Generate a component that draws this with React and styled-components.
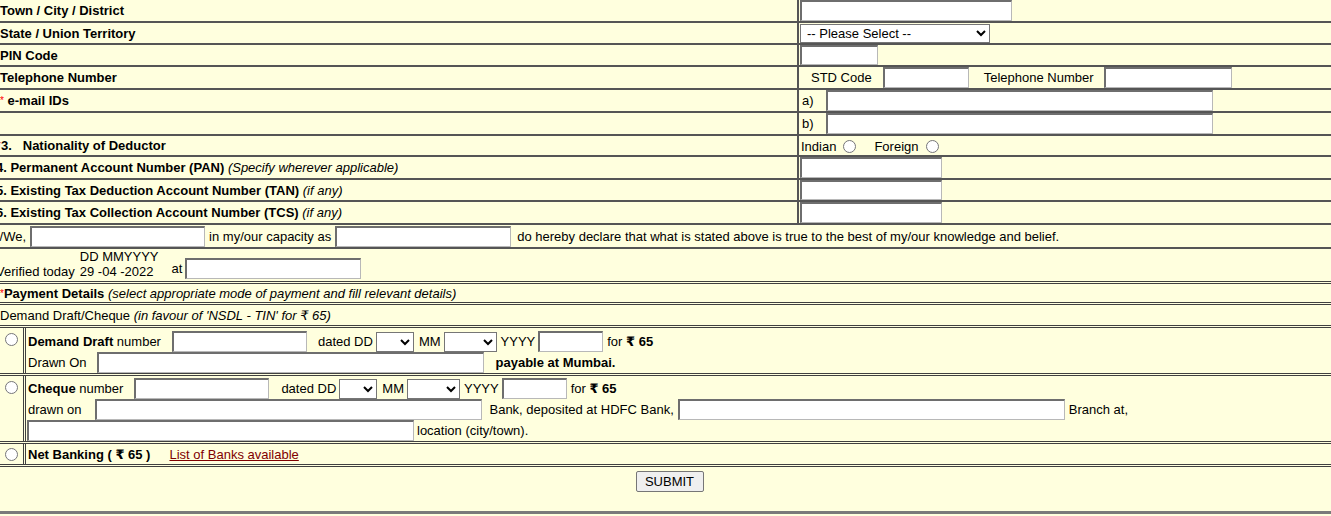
import React from 'react';
import styled, { createGlobalStyle } from 'styled-components';

const GlobalStyle = createGlobalStyle`
  html, body {
    margin: 0;
    padding: 0;
    background: #ffffde;
    overflow: hidden;
  }
  body {
    font-family: "Liberation Sans", Arial, "DejaVu Sans", sans-serif;
    font-size: 13px;
    line-height: 15px;
    color: #000;
  }
`;

const Page = styled.div`
  width: 1347px;
  margin-left: -4px;
  min-height: 516px;
  background: #ffffde;
`;

const Row = styled.div`
  box-sizing: border-box;
  display: flex;
  align-items: ${(p) => p.$align || 'center'};
  justify-content: ${(p) => p.$justify || 'flex-start'};
  height: ${(p) => p.$h}px;
  padding: ${(p) => p.$pt || 0}px 0 ${(p) => p.$pb || 0}px ${(p) => p.$pl || 0}px;
  border-bottom: ${(p) => (p.$double ? '3px double #404040' : '2px solid #555')};
  white-space: nowrap;
`;

const Label = styled.div`
  box-sizing: border-box;
  flex: 0 0 803px;
  align-self: stretch;
  display: flex;
  align-items: center;
  padding-left: ${(p) => p.$indent || 0}px;
  border-right: 2px solid #555;
  font-weight: bold;
`;

const Value = styled.div`
  flex: 1;
  display: flex;
  align-items: center;
  padding-left: 1px;
  padding-top: ${(p) => p.$pt || 0}px;
`;

const Text = styled.span`
  margin-left: ${(p) => p.$ml || 0}px;
  margin-bottom: ${(p) => p.$mb || 0}px;
  font-weight: ${(p) => (p.$bold ? 'bold' : 'normal')};
`;

const Note = styled.span`
  font-weight: normal;
  font-style: italic;
`;

const Req = styled.span`
  color: #ff0000;
  font-size: ${(p) => p.$size || 10}px;
  font-weight: normal;
  vertical-align: top;
`;

const Field = styled.input.attrs({ type: 'text' })`
  box-sizing: border-box;
  width: ${(p) => p.$w}px;
  height: ${(p) => p.$h || 20}px;
  margin: 0 0 0 ${(p) => p.$ml || 0}px;
  padding: 1px 2px;
  border-style: solid;
  border-width: 2px 1px 1px 2px;
  border-color: #6e6e6e #b8b8b8 #b8b8b8 #6e6e6e;
  background: #fff;
  font: 13px "Liberation Sans", Arial, sans-serif;
  flex: none;
`;

const Picker = styled.select`
  box-sizing: border-box;
  width: ${(p) => p.$w}px;
  height: ${(p) => p.$h || 20}px;
  margin: 0 0 0 ${(p) => p.$ml || 0}px;
  padding: 0 0 0 2px;
  border: 1px solid #767676;
  border-radius: 0;
  background: #fff;
  color: #000;
  font: 13px "Liberation Sans", Arial, sans-serif;
  flex: none;
`;

const Radio = styled.input.attrs({ type: 'radio' })`
  width: 13px;
  height: 13px;
  margin: 0 0 0 ${(p) => p.$ml || 0}px;
  flex: none;
`;

const DateStack = styled.div`
  display: flex;
  flex-direction: column;
  margin-left: ${(p) => p.$ml || 0}px;
`;

const PayRow = styled.div`
  box-sizing: border-box;
  display: flex;
  height: ${(p) => p.$h}px;
  border-bottom: 3px double #404040;
  white-space: nowrap;
`;

const RadioCell = styled.div`
  box-sizing: border-box;
  flex: 0 0 30px;
  padding: ${(p) => p.$pt}px 0 0 9px;
  border-right: 3px double #404040;
`;

const PayBody = styled.div`
  flex: 1;
  display: flex;
  flex-direction: column;
  padding: ${(p) => p.$pt || 0}px 0 0 2px;
`;

const Line = styled.div`
  display: flex;
  align-items: center;
  height: ${(p) => p.$h || 21}px;
`;

const BankLink = styled.a`
  margin-left: ${(p) => p.$ml || 0}px;
  color: #800000;
  text-decoration: underline;
`;

const SubmitButton = styled.button`
  box-sizing: border-box;
  width: 68px;
  height: 21px;
  padding: 0;
  border: 1px solid #767676;
  border-radius: 2px;
  background: #efefef;
  color: #000;
  font: 13px "Liberation Sans", Arial, sans-serif;
`;

const SubmitRow = styled(Row)`
  border-bottom: 3px solid #7a7a7a;
`;

const days = ['', ...Array.from({ length: 31 }, (_, i) => String(i + 1).padStart(2, '0'))];
const months = ['', ...Array.from({ length: 12 }, (_, i) => String(i + 1).padStart(2, '0'))];

const DateFields = ({ first }) => (
  <>
    <Text $ml={first}>dated DD</Text>
    <Picker $w={38} $ml={3}>
      {days.map((d) => <option key={d}>{d}</option>)}
    </Picker>
    <Text $ml={5}>MM</Text>
    <Picker $w={53} $ml={3}>
      {months.map((m) => <option key={m}>{m}</option>)}
    </Picker>
    <Text $ml={4}>YYYY</Text>
    <Field $w={65} $h={21} $ml={3} />
    <Text $ml={4}>for <b>₹ 65</b></Text>
  </>
);

export default function App() {
  return (
    <Page>
      <GlobalStyle />

      <Row $h={23}>
        <Label $indent={4}><span>Town / City / District</span></Label>
        <Value><Field $w={212} $h={21} /></Value>
      </Row>
      <Row $h={22}>
        <Label $indent={4}><span>State / Union Territory</span></Label>
        <Value>
          <Picker $w={190} $h={19}>
            <option>-- Please Select --</option>
          </Picker>
        </Value>
      </Row>
      <Row $h={22}>
        <Label $indent={4}><span>PIN Code</span></Label>
        <Value><Field $w={78} /></Value>
      </Row>
      <Row $h={23}>
        <Label $indent={4}><span>Telephone Number</span></Label>
        <Value>
          <Text $ml={11}>STD Code</Text>
          <Field $w={86} $h={21} $ml={11} />
          <Text $ml={15}>Telephone Number</Text>
          <Field $w={128} $h={21} $ml={10} />
        </Value>
      </Row>
      <Row $h={23}>
        <Label $indent={4}><span><Req>*</Req> e-mail IDs</span></Label>
        <Value>
          <Text $ml={2}>a)</Text>
          <Field $w={387} $h={21} $ml={12} />
        </Value>
      </Row>
      <Row $h={23}>
        <Label />
        <Value>
          <Text $ml={2}>b)</Text>
          <Field $w={387} $h={21} $ml={12} />
        </Value>
      </Row>
      <Row $h={21}>
        <Label><span><Req $size={13}>*</Req>3.&nbsp;&nbsp;&nbsp;Nationality of Deductor</span></Label>
        <Value $pt={2}>
          <Text $ml={1}>Indian</Text>
          <Radio name="nationality" $ml={7} />
          <Text $ml={18}>Foreign</Text>
          <Radio name="nationality" $ml={7} />
        </Value>
      </Row>
      <Row $h={23}>
        <Label><span>4. Permanent Account Number (PAN) <Note>(Specify wherever applicable)</Note></span></Label>
        <Value><Field $w={142} $h={21} /></Value>
      </Row>
      <Row $h={22}>
        <Label><span>5. Existing Tax Deduction Account Number (TAN) <Note>(if any)</Note></span></Label>
        <Value><Field $w={142} /></Value>
      </Row>
      <Row $h={23}>
        <Label><span>6. Existing Tax Collection Account Number (TCS) <Note>(if any)</Note></span></Label>
        <Value><Field $w={142} $h={21} /></Value>
      </Row>

      <Row $h={24}>
        <Text>I/We,</Text>
        <Field $w={175} $h={21} $ml={4} />
        <Text $ml={4}>in my/our capacity as</Text>
        <Field $w={176} $h={21} $ml={4} />
        <Text $ml={6}>do hereby declare that what is stated above is true to the best of my/our knowledge and belief.</Text>
      </Row>
      <Row $h={35} $double $align="flex-end" $pb={2}>
        <Text>Verified today</Text>
        <DateStack $ml={5}>
          <span>DD MMYYYY</span>
          <span>29 -04 -2022</span>
        </DateStack>
        <Text $ml={13} $mb={3}>at</Text>
        <Field $w={176} $h={21} $ml={3} />
      </Row>

      <Row $h={21} $double $pl={4}>
        <span>
          <Req>*</Req><b>Payment Details</b>{' '}
          <Note>(select appropriate mode of payment and fill relevant details)</Note>
        </span>
      </Row>
      <Row $h={23} $double $pl={4}>
        <span>Demand Draft/Cheque <Note>(in favour of 'NSDL - TIN' for ₹ 65)</Note></span>
      </Row>

      <PayRow $h={48}>
        <RadioCell $pt={5}><Radio name="mode" /></RadioCell>
        <PayBody $pt={3}>
          <Line>
            <Text><b>Demand Draft</b> number</Text>
            <Field $w={135} $h={21} $ml={11} />
            <DateFields first={11} />
          </Line>
          <Line>
            <Text>Drawn On</Text>
            <Field $w={387} $h={21} $ml={10} />
            <Text $ml={12} $bold>payable at Mumbai.</Text>
          </Line>
        </PayBody>
      </PayRow>

      <PayRow $h={68}>
        <RadioCell $pt={5}><Radio name="mode" /></RadioCell>
        <PayBody $pt={2}>
          <Line>
            <Text><b>Cheque</b> number</Text>
            <Field $w={135} $h={21} $ml={11} />
            <DateFields first={12} />
          </Line>
          <Line>
            <Text>drawn on</Text>
            <Field $w={387} $h={21} $ml={14} />
            <Text $ml={7}>Bank, deposited at HDFC Bank,</Text>
            <Field $w={387} $h={21} $ml={4} />
            <Text $ml={4}>Branch at,</Text>
          </Line>
          <Line>
            <Field $w={387} $h={21} $ml={-1} />
            <Text $ml={3}>location (city/town).</Text>
          </Line>
        </PayBody>
      </PayRow>

      <PayRow $h={23}>
        <RadioCell $pt={4}><Radio name="mode" /></RadioCell>
        <PayBody>
          <Line $h={20}>
            <Text $bold>Net Banking ( ₹ 65 )</Text>
            <BankLink href="#banks" $ml={19}>List of Banks available</BankLink>
          </Line>
        </PayBody>
      </PayRow>

      <SubmitRow $h={47} $justify="center" $align="flex-start" $pt={4}>
        <SubmitButton type="button">SUBMIT</SubmitButton>
      </SubmitRow>
    </Page>
  );
}
